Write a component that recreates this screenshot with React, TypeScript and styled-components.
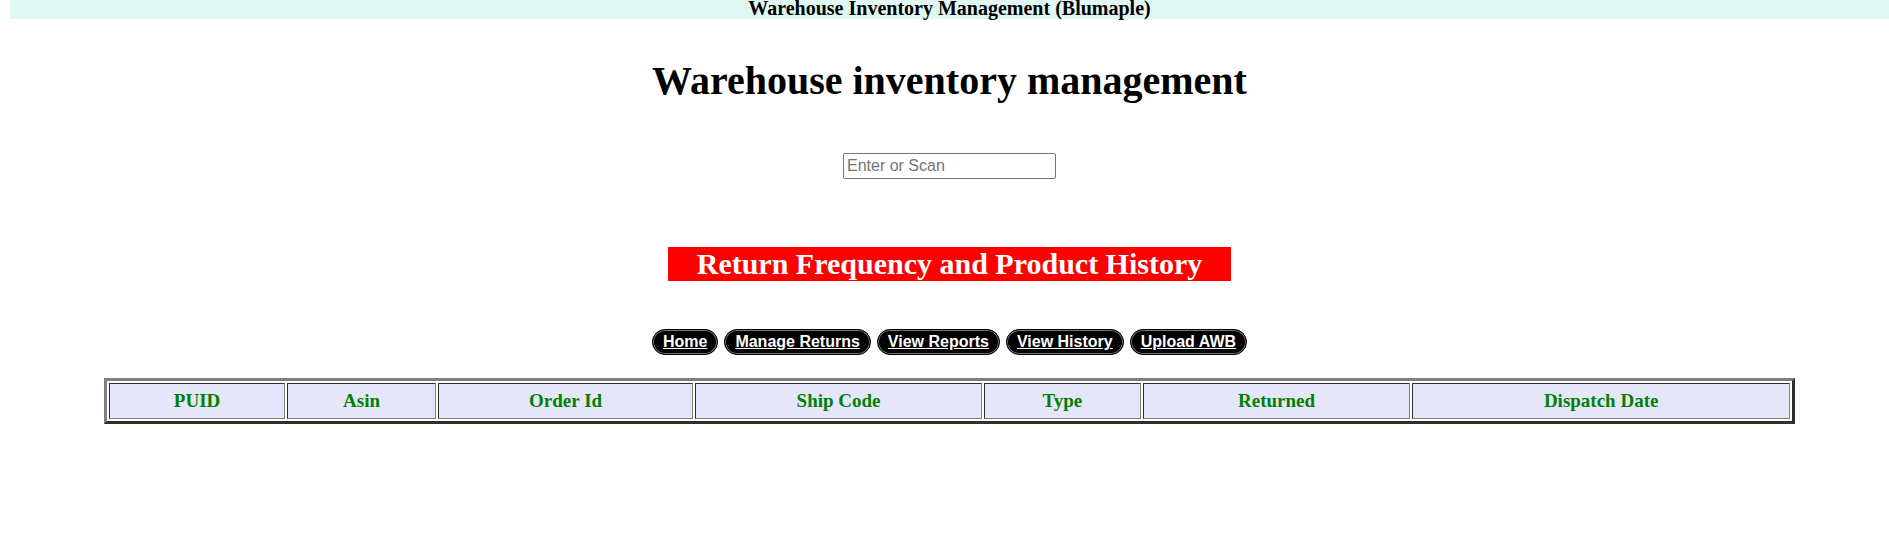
import styled, { createGlobalStyle } from 'styled-components';
import React from 'react';

const GlobalStyle = createGlobalStyle`
  body {
    margin: 0;
    font-family: "Liberation Serif", "Times New Roman", serif;
    background: #ffffff;
  }
  #root {
    padding-left: 10px;
  }
`;

const TopBar = styled.div`
  height: 19px;
  background-color: #e0f8f1;
  text-align: center;
  font-size: 20px;
  font-weight: bold;
  line-height: 16px;
  color: #000;
`;

const Title = styled.h1`
  margin: 38px 0 0 0;
  text-align: center;
  font-size: 40px;
  font-weight: bold;
`;

const SearchRow = styled.div`
  display: flex;
  justify-content: center;
  margin-top: 49px;
`;

const SearchInput = styled.input`
  width: 213px;
  height: 26px;
  box-sizing: border-box;
  padding: 1px 3px;
  font-family: "Liberation Sans", Arial, sans-serif;
  font-size: 16px;
  border: 1px solid #767676;
  border-radius: 2px;
  &::placeholder {
    color: #757575;
  }
`;

const BannerRow = styled.div`
  display: flex;
  justify-content: center;
  margin-top: 68px;
`;

const Banner = styled.h2`
  margin: 0;
  background-color: #ff0000;
  color: #ffffff;
  font-size: 30px;
  font-weight: bold;
  padding: 0 29px;
`;

const NavRow = styled.div`
  display: flex;
  justify-content: center;
  gap: 6px;
  margin-top: 48px;
`;

const NavButton = styled.a`
  display: inline-block;
  height: 26px;
  box-sizing: border-box;
  padding: 0 10px;
  background-color: #000;
  color: #fff;
  border: 1px solid #000;
  box-shadow: inset 0 0 0 1px #777;
  border-radius: 13px;
  font-family: "Liberation Sans", Arial, sans-serif;
  font-size: 16px;
  font-weight: bold;
  line-height: 23px;
  text-decoration: underline;
  cursor: pointer;
`;

const Table = styled.table`
  width: 90%;
  margin: 23px auto 0 auto;
  table-layout: fixed;
  border-collapse: separate;
  border-spacing: 2px;
  border-width: 3px;
  border-style: solid;
  border-color: #808080 #2f2f2f #2f2f2f #808080;
`;

const HeadCell = styled.th<{ $w: number }>`
  box-sizing: border-box;
  width: ${(p) => p.$w}%;
  background-color: #e6e6fa;
  color: #008000;
  font-size: 19px;
  font-weight: bold;
  padding: 6px 4px;
  border-width: 1px;
  border-style: solid;
  border-color: #2f2f2f #808080 #808080 #2f2f2f;
`;

const columns: [string, number][] = [
  ['PUID', 10.56],
  ['Asin', 8.91],
  ['Order Id', 15.3],
  ['Ship Code', 17.17],
  ['Type', 9.41],
  ['Returned', 16.02],
  ['Dispatch Date', 22.63],
];

const navItems = ['Home', 'Manage Returns', 'View Reports', 'View History', 'Upload AWB'];

const App: React.FC = () => {
  return (
    <>
      <GlobalStyle />
      <TopBar>Warehouse Inventory Management (Blumaple)</TopBar>
      <Title>Warehouse inventory management</Title>
      <SearchRow>
        <SearchInput type="text" placeholder="Enter or Scan" />
      </SearchRow>
      <BannerRow>
        <Banner>Return Frequency and Product History</Banner>
      </BannerRow>
      <NavRow>
        {navItems.map((item) => (
          <NavButton key={item}>{item}</NavButton>
        ))}
      </NavRow>
      <Table>
        <thead>
          <tr>
            {columns.map(([name, w]) => (
              <HeadCell key={name} $w={w}>
                {name}
              </HeadCell>
            ))}
          </tr>
        </thead>
      </Table>
    </>
  );
};

export default App;
